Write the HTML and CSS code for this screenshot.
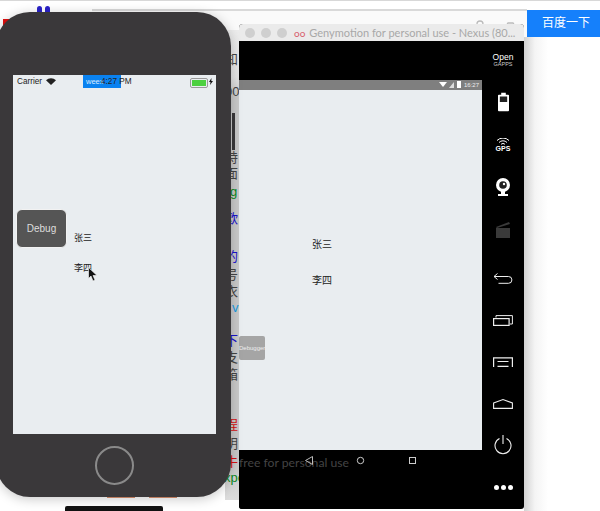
FILE: index.html
```html
<!DOCTYPE html>
<html lang="en">
<head>
    <meta charset="UTF-8">
    <meta name="viewport" content="width=device-width, initial-scale=1.0">
    <title>Weex debug</title>
    <link rel="stylesheet" href="styles.css">
</head>
<body>
    <div class="desktop">
        <!-- browser page behind the windows -->
        <div class="browser">
            <div class="browser-topline"></div>
            <div class="paw"><span></span><span></span></div>
            <div class="red-mark"></div>
            <div class="search-box"></div>
            <svg class="search-icons" width="60" height="20" viewBox="0 0 60 20">
                <rect x="17" y="5" width="6" height="15" rx="3" fill="none" stroke="#bbb" stroke-width="1.3"/>
                <line x1="34" y1="9" x2="34" y2="20" stroke="#ddd"/>
                <path d="M43 20v-9l3-1 2-3h5l2 3 3 1v9" fill="none" stroke="#bbb" stroke-width="1.3"/>
                <circle cx="50" cy="15" r="3.5" fill="none" stroke="#bbb" stroke-width="1.3"/>
            </svg>
            <div class="search-btn">百度一下</div>
            <div class="window-shadow"></div>
            <div class="strip">
                <span class="frag frag-zhi">知</span>
                <span class="frag frag-num">00</span>
                <span class="frag frag-te">特</span>
                <span class="frag frag-mian">面</span>
                <span class="frag frag-g green">g</span>
                <span class="frag frag-ou blue">欧</span>
                <span class="frag frag-de blue">的</span>
                <span class="frag frag-hao">号</span>
                <span class="frag frag-yi">衣</span>
                <span class="frag frag-v cyan">v</span>
                <span class="frag frag-xia blue">下</span>
                <span class="frag frag-zhii">支</span>
                <span class="frag frag-xiang">箱</span>
                <span class="frag frag-cheng red">程</span>
                <span class="frag frag-ming">明</span>
                <span class="frag frag-niu red">牛</span>
                <span class="frag frag-xpo green">xpo</span>
                <div class="strip-block"></div>
            </div>
            <div class="under-marks"><i></i><i></i></div>
        </div>

        <!-- genymotion window -->
        <div class="geny">
            <div class="geny-title">
                <i class="light"></i><i class="light"></i><i class="light"></i>
                <span class="geny-logo">oo</span>
                <span class="geny-name">Genymotion for personal use - Nexus (80...</span>
            </div>
            <div class="geny-body">
                <div class="android">
                    <div class="android-top"></div>
                    <div class="android-status">
                        <svg width="22" height="8" viewBox="0 0 22 8">
                            <path d="M0 1h8L4 6z" fill="#fff"/>
                            <path d="M15 1v6h-5z" fill="#ddd"/>
                            <rect x="18" y="0" width="4" height="7" fill="#fff"/>
                        </svg>
                        <span>16:27</span>
                    </div>
                    <div class="android-screen">
                        <div class="android-name name-a">张三</div>
                        <div class="android-name name-b">李四</div>
                        <div class="debugger">Debugger</div>
                    </div>
                    <div class="android-nav">
                        <span class="watermark">free for personal use</span>
                        <svg class="nav-keys" width="120" height="12" viewBox="0 0 120 12">
                            <path d="M9.500 1.500v8L2.500 5.500z" fill="none" stroke="#bbb" stroke-width="1"/>
                            <circle cx="57.500" cy="5.500" r="3.200" fill="none" stroke="#ccc" stroke-width="1"/>
                            <rect x="106.500" y="2.500" width="6" height="6" fill="none" stroke="#ccc" stroke-width="1"/>
                        </svg>
                    </div>
                </div>
                <div class="side">
                    <div class="gapps"><b>Open</b><span>GAPPS</span></div>
                    <svg class="side-icon icon-battery" width="11" height="20" viewBox="0 0 12 20">
                        <path d="M3.500 0h5v2H11a1 1 0 0 1 1 1v16a1 1 0 0 1-1 1H1a1 1 0 0 1-1-1V3a1 1 0 0 1 1-1h2.500z" fill="#fff"/>
                        <rect x="2" y="4" width="8" height="6" fill="#222"/>
                    </svg>
                    <div class="gps">
                        <svg width="14" height="7" viewBox="0 0 14 7">
                            <path d="M1 2.500a8.500 8.500 0 0 1 12 0M3 4.500a5.500 5.500 0 0 1 8 0M5 6.500a2.500 2.500 0 0 1 4 0" fill="none" stroke="#fff" stroke-width="1"/>
                        </svg>
                        <span>GPS</span>
                    </div>
                    <svg class="side-icon icon-cam" width="16" height="18" viewBox="0 0 16 18">
                        <circle cx="8" cy="7" r="7" fill="#fff"/>
                        <circle cx="8" cy="7" r="3.800" fill="#222"/>
                        <circle cx="9" cy="6" r="1.200" fill="#fff"/>
                        <path d="M3 16h10v2H3z" fill="#fff"/>
                        <path d="M6 13h4v3H6z" fill="#fff"/>
                    </svg>
                    <svg class="side-icon icon-clap" width="14" height="17" viewBox="0 0 14 17">
                        <path d="M0 6l13-5 1 2-13 4z" fill="#3a3a3a"/>
                        <rect x="0" y="7" width="14" height="10" fill="#3a3a3a"/>
                    </svg>
                    <svg class="side-icon icon-back" width="20" height="11" viewBox="0 0 20 11">
                        <path d="M4.500 0.500L1 3.500 4.500 6.500M1 3.500h14.500a3.300 3.300 0 0 1 0 6.800H5.500" fill="none" stroke="#eee" stroke-width="1"/>
                    </svg>
                    <svg class="side-icon icon-recent" width="20" height="11" viewBox="0 0 20 11">
                        <path d="M3 2.500V0.600h16.400V9H17" fill="none" stroke="#eee" stroke-width="1"/>
                        <rect x="0.600" y="3.600" width="15.500" height="6.800" fill="none" stroke="#eee" stroke-width="1.200"/>
                    </svg>
                    <svg class="side-icon icon-menu" width="20" height="10" viewBox="0 0 20 10">
                        <path d="M0.600 10V0.800h18.800V10M4.500 4.500h11M4.500 9.300h11" fill="none" stroke="#eee" stroke-width="1.200"/>
                    </svg>
                    <svg class="side-icon icon-home" width="20" height="10" viewBox="0 0 20 10">
                        <path d="M0.600 4L10 0.600 19.400 4V9.400H0.600z" fill="none" stroke="#eee" stroke-width="1.100"/>
                    </svg>
                    <svg class="side-icon icon-power" width="18" height="20" viewBox="0 0 18 20">
                        <path d="M5.500 3.500a8 8 0 1 0 7 0M9 0v9" fill="none" stroke="#eee" stroke-width="1.100"/>
                    </svg>
                    <div class="dots"><i></i><i></i><i></i></div>
                </div>
            </div>
        </div>

        <!-- ios simulator -->
        <div class="iphone">
            <div class="ios-screen">
                <div class="weex-tag">weex</div>
                <div class="ios-status">
                    <span>Carrier</span>
                    <svg class="ios-wifi" width="10" height="7" viewBox="0 0 10 7">
                        <path d="M0 2.200a7.500 7.500 0 0 1 10 0L5 7z" fill="#222"/>
                    </svg>
                    <span class="ios-time">4:27 PM</span>
                    <div class="ios-battery"><i></i></div>
                    <svg class="ios-bolt" width="4" height="7" viewBox="0 0 4 7">
                        <path d="M2.500 0L0 4h1.500L1 7l3-4H2.300z" fill="#111"/>
                    </svg>
                </div>
                <div class="debug-box">Debug</div>
                <div class="ios-name name-c">张三</div>
                <div class="ios-name name-d">李四</div>
                <svg class="cursor" width="10" height="15" viewBox="0 0 10 15">
                    <path d="M0.500 0.500v11l2.500-2.500 2 5 2-1-2-4.500h4z" fill="#111" stroke="#fff" stroke-width="0.600"/>
                </svg>
            </div>
            <div class="home-btn"></div>
        </div>
        <div class="under-bar"></div>
    </div>
</body>
</html>
```

FILE: styles.css
```css
html, body {
    margin: 0;
    padding: 0;
}
body {
    font-family: "Liberation Sans", "Noto Sans CJK SC", sans-serif;
    background-color: #fff;
    color: #333;
}
.desktop {
    position: relative;
    width: 600px;
    height: 511px;
    overflow: hidden;
    background-color: #fff;
}

/* browser behind */
.browser {
    position: absolute;
    inset: 0;
}
.browser-topline {
    height: 1px;
    background-color: #d8d8d8;
}
.paw {
    position: absolute;
    left: 37px;
    top: 6px;
    display: flex;
    gap: 3px;
}
.paw span {
    width: 5px;
    height: 8px;
    border-radius: 3px;
    background-color: #2a22c8;
}
.red-mark {
    position: absolute;
    left: 3px;
    top: 19px;
    width: 8px;
    height: 10px;
    background-color: #e01010;
}
.search-box {
    position: absolute;
    left: 92px;
    top: 9px;
    width: 435px;
    height: 28px;
    box-sizing: border-box;
    border-top: 2px solid #d9d9d9;
    background-color: #fafafa;
}
.search-icons {
    position: absolute;
    left: 460px;
    top: 16px;
}
.search-btn {
    position: absolute;
    left: 527px;
    top: 10px;
    width: 73px;
    height: 27px;
    padding-left: 5px;
    box-sizing: border-box;
    background-color: #1580fb;
    color: #fff;
    font-size: 12px;
    line-height: 26px;
    text-align: center;
}
.window-shadow {
    position: absolute;
    left: 524px;
    top: 37px;
    width: 24px;
    height: 474px;
    background: linear-gradient(to right, #d2d2d2, #f4f4f4 45%, #fff);
}
.strip {
    position: absolute;
    left: 225px;
    top: 30px;
    width: 14px;
    height: 470px;
    background: linear-gradient(to bottom, #ececec, #e4e4e4 10%, #c9c9c9 14%, #c9c9c9 92%, #dcdcdc);
    overflow: hidden;
}
.strip-block {
    position: absolute;
    left: 7px;
    top: 83px;
    width: 3px;
    height: 37px;
    background-color: #3a383a;
}
.frag {
    position: absolute;
    left: 0;
    font-size: 13px;
    line-height: 16px;
    color: #444;
    white-space: nowrap;
}
.frag-zhi { top: 22px; }
.frag-num { top: 54px; }
.frag-te { top: 120px; }
.frag-mian { top: 136px; }
.frag-g { top: 154px; left: 5px; }
.frag-ou { top: 181px; }
.frag-de { top: 219px; }
.frag-hao { top: 237px; }
.frag-yi { top: 254px; }
.frag-v { top: 270px; left: 7px; }
.frag-xia { top: 303px; }
.frag-zhii { top: 320px; }
.frag-xiang { top: 337px; }
.frag-cheng { top: 387px; }
.frag-ming { top: 406px; }
.frag-niu { top: 424px; }
.frag-xpo { top: 440px; left: -1px; }
.green { color: #0a8a1e; }
.blue { color: #1a12cc; }
.cyan { color: #1a9ae0; }
.red { color: #d81010; }
.under-marks {
    position: absolute;
    left: 107px;
    top: 497px;
    display: flex;
    gap: 14px;
}
.under-marks i {
    width: 28px;
    height: 1px;
    background-color: #d9906e;
}

/* genymotion */
.geny {
    position: absolute;
    left: 239px;
    top: 24px;
    width: 285px;
    height: 485px;
    border-radius: 4px 4px 3px 3px;
    overflow: hidden;
    background-color: #000;
}
.geny-title {
    display: flex;
    align-items: center;
    height: 17px;
    padding-left: 6px;
    background-color: #ebebeb;
    font-family: Lato, sans-serif;
    font-size: 11px;
    color: #a8a8a8;
    white-space: nowrap;
}
.light {
    flex: none;
    width: 10px;
    height: 10px;
    margin-right: 6px;
    border-radius: 50%;
    background-color: #cfcfcf;
}
.geny-logo {
    flex: none;
    margin-left: 1px;
    margin-right: 4px;
    font-size: 10px;
    color: #d8606e;
}
.geny-body {
    display: flex;
    height: 468px;
}
.android {
    width: 243px;
    display: flex;
    flex-direction: column;
}
.android-top {
    height: 39px;
    background-color: #000;
}
.android-status {
    height: 10px;
    background-color: #7f7f7f;
    display: flex;
    align-items: center;
    justify-content: flex-end;
    gap: 3px;
    padding-right: 3px;
    font-size: 6px;
    color: #eee;
}
.android-screen {
    position: relative;
    height: 360px;
    background-color: #e9edf0;
}
.android-name {
    position: absolute;
    left: 73px;
    font-size: 10px;
    line-height: 14px;
    color: #222;
}
.name-a { top: 148px; }
.name-b { top: 184px; }
.debugger {
    position: absolute;
    left: 0;
    top: 246px;
    width: 26px;
    height: 24px;
    border-radius: 2px;
    background-color: #a5a5a5;
    color: #eee;
    font-size: 6px;
    line-height: 24px;
    text-align: center;
}
.android-nav {
    position: relative;
    flex: 1;
    background-color: #000;
}
.watermark {
    position: absolute;
    left: 0;
    top: 5px;
    font-family: Lato, sans-serif;
    font-size: 12.200px;
    color: #444;
    white-space: nowrap;
}
.nav-keys {
    position: absolute;
    left: 64px;
    top: 5px;
}
.side {
    flex: 1;
    display: flex;
    flex-direction: column;
    align-items: center;
    padding-top: 12px;
    color: #fff;
}
.gapps {
    display: flex;
    flex-direction: column;
    align-items: center;
    height: 18px;
    line-height: 8px;
}
.gapps b {
    font-size: 8.500px;
    font-weight: normal;
}
.gapps span {
    font-size: 5.500px;
    line-height: 7px;
    color: #ccc;
}
.side-icon {
    flex: none;
}
.icon-battery { margin-top: 21px; }
.icon-cam { margin-top: 26px; }
.icon-clap { margin-top: 25px; }
.icon-back { margin-top: 35px; }
.icon-recent { margin-top: 31px; }
.icon-menu { margin-top: 31px; }
.icon-home { margin-top: 32px; }
.icon-power { margin-top: 26px; }
.gps {
    display: flex;
    flex-direction: column;
    align-items: center;
    margin-top: 26px;
    font-size: 7px;
    font-weight: bold;
    line-height: 7px;
}
.dots {
    display: flex;
    gap: 2px;
    margin-top: 30px;
}
.dots i {
    width: 5px;
    height: 5px;
    border-radius: 50%;
    background-color: #fff;
}

/* iphone */
.iphone {
    position: absolute;
    left: -4px;
    top: 12px;
    width: 235px;
    height: 485px;
    border-radius: 34px;
    background-color: #3a383a;
    box-shadow: 0 2px 12px rgba(0, 0, 0, 0.22);
}
.ios-screen {
    position: absolute;
    left: 17px;
    top: 63px;
    width: 203px;
    height: 359px;
    background-color: #e9edf0;
    font-size: 8.200px;
    color: #222;
}
.ios-status {
    position: relative;
    display: flex;
    align-items: center;
    height: 13px;
    padding: 0 4px;
}
.ios-wifi {
    margin-left: 4px;
}
.ios-time {
    position: absolute;
    left: 88px;
    top: 2px;
}
.ios-battery {
    position: absolute;
    left: 177px;
    top: 3px;
    width: 14px;
    height: 6px;
    padding: 1px;
    border: 1px solid #999;
    border-radius: 2px;
}
.ios-battery i {
    display: block;
    height: 100%;
    background-color: #4cd040;
}
.ios-bolt {
    position: absolute;
    left: 196px;
    top: 3px;
}
.weex-tag {
    position: absolute;
    left: 70px;
    top: 0;
    width: 38px;
    height: 13px;
    padding-left: 3px;
    box-sizing: border-box;
    background-color: #0a82f0;
    color: #d8ecff;
    font-size: 7.500px;
    line-height: 13px;
}
.debug-box {
    position: absolute;
    left: 3px;
    top: 134px;
    width: 51px;
    height: 39px;
    box-sizing: border-box;
    border: 1px solid #f2f2f2;
    border-radius: 6px;
    background-color: #555;
    color: #ddd;
    font-size: 10px;
    line-height: 37px;
    text-align: center;
}
.ios-name {
    position: absolute;
    left: 61px;
    font-size: 9px;
    line-height: 12px;
    color: #222;
}
.name-c { top: 157px; }
.name-d { top: 187px; }
.cursor {
    position: absolute;
    left: 75px;
    top: 192px;
}
.home-btn {
    position: absolute;
    left: 99px;
    top: 434px;
    width: 39px;
    height: 39px;
    box-sizing: border-box;
    border: 2px solid #8a8a8a;
    border-radius: 50%;
}
.under-bar {
    position: absolute;
    left: 65px;
    top: 506px;
    width: 98px;
    height: 5px;
    border-radius: 2px 2px 0 0;
    background-color: #111;
}
```
